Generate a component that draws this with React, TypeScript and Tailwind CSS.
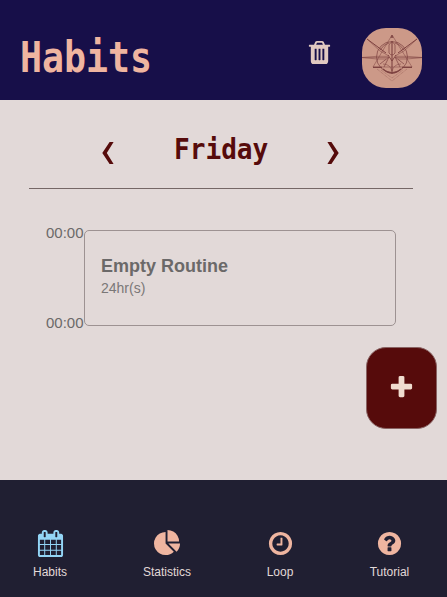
import React from "react";

const CIRCLE =
  "M1664 896q0 209-103 385.5t-279.5 279.5-385.5 103-385.5-103-279.5-279.5-103-385.5 103-385.5 279.5-279.5 385.5-103 385.5 103 279.5 279.5 103 385.5z";

const icons = {
  trash:
    "M704 1376v-704q0-14-9-23t-23-9h-64q-14 0-23 9t-9 23v704q0 14 9 23t23 9h64q14 0 23-9t9-23zm256 0v-704q0-14-9-23t-23-9h-64q-14 0-23 9t-9 23v704q0 14 9 23t23 9h64q14 0 23-9t9-23zm256 0v-704q0-14-9-23t-23-9h-64q-14 0-23 9t-9 23v704q0 14 9 23t23 9h64q14 0 23-9t9-23zm-544-992h448l-48-117q-7-9-17-11h-317q-10 2-17 11zm928 32v64q0 14-9 23t-23 9h-96v948q0 83-47 143.5t-113 60.5h-832q-66 0-113-58.5t-47-141.5v-952h-96q-14 0-23-9t-9-23v-64q0-14 9-23t23-9h309l70-167q15-37 54-63t79-26h320q40 0 79 26t54 63l70 167h309q14 0 23 9t9 23z",
  plus:
    "M1600 736v192q0 40-28 68t-68 28h-416v416q0 40-28 68t-68 28h-192q-40 0-68-28t-28-68v-416h-416q-40 0-68-28t-28-68v-192q0-40 28-68t68-28h416v-416q0-40 28-68t68-28h192q40 0 68 28t28 68v416h416q40 0 68 28t28 68z",
  calendar:
    "M192 1664h288v-288h-288v288zm352 0h320v-288h-320v288zm-352-352h288v-320h-288v320zm352 0h320v-320h-320v320zm-352-384h288v-288h-288v288zm736 736h320v-288h-320v288zm-384-736h320v-288h-320v288zm768 736h288v-288h-288v288zm-384-352h320v-320h-320v320zm-352-864v-288q0-13-9.5-22.5t-22.5-9.5h-64q-13 0-22.5 9.5t-9.5 22.5v288q0 13 9.5 22.5t22.5 9.5h64q13 0 22.5-9.5t9.5-22.5zm736 864h288v-320h-288v320zm-384-384h320v-288h-320v288zm384 0h288v-288h-288v288zm32-480v-288q0-13-9.5-22.5t-22.5-9.5h-64q-13 0-22.5 9.5t-9.5 22.5v288q0 13 9.5 22.5t22.5 9.5h64q13 0 22.5-9.5t9.5-22.5zm384-64v1280q0 52-38 90t-90 38h-1408q-52 0-90-38t-38-90v-1280q0-52 38-90t90-38h128v-96q0-66 47-113t113-47h64q66 0 113 47t47 113v96h384v-96q0-66 47-113t113-47h64q66 0 113 47t47 113v96h128q52 0 90 38t38 90z",
  pie:
    "M768 890l546 546q-106 108-247.5 168t-298.5 60q-209 0-385.5-103t-279.5-279.5-103-385.5 103-385.5 279.5-279.5 385.5-103v762zm187 6h773q0 157-60 298.5t-168 247.5zm709-128h-768v-768q209 0 385.5 103t279.5 279.5 103 385.5z",
  clock:
    "M1024 544v448q0 14-9 23t-23 9h-320q-14 0-23-9t-9-23v-64q0-14 9-23t23-9h224v-352q0-14 9-23t23-9h64q14 0 23 9t9 23zM1440 896q0-148-73-273t-198-198-273-73-273 73-198 198-73 273 73 273 198 198 273 73 273-73 198-198 73-273z" +
    CIRCLE,
  question:
    "M1024 1376v-192q0-14-9-23t-23-9h-192q-14 0-23 9t-9 23v192q0 14 9 23t23 9h192q14 0 23-9t9-23zm256-672q0-88-55.5-163t-138.5-116-170-41q-243 0-371 213-15 24 8 42l132 100q7 6 19 6 16 0 25-12 53-68 86-92 34-24 86-24 48 0 85.5 26t37.5 59q0 38-20 61t-68 45q-63 28-115.5 86.5t-52.5 125.5v36q0 14 9 23t23 9h192q14 0 23-9t9-23q0-19 21.5-49.5t54.5-49.5q32-18 49-28.5t46-35 44.5-48 28-60.5 12.5-81z" +
    CIRCLE,
};

function Icon({ name, className = "" }: { name: keyof typeof icons; className?: string }) {
  return (
    <svg viewBox="0 0 1792 1792" fill="currentColor" fillRule="evenodd" className={`size-[27px] shrink-0 overflow-visible ${className}`}>
      <path d={icons[name]} />
    </svg>
  );
}

function Chevron({ flip = false }: { flip?: boolean }) {
  return (
    <svg viewBox="0 0 12 22" fill="currentColor" className={`h-[22px] w-3 ${flip ? "-scale-x-100" : ""}`}>
      <path d="M7.6 0H11.6L4.8 11L11.6 22H7.6L.3 11Z" />
    </svg>
  );
}

function Emblem() {
  return (
    <svg viewBox="0 0 60 60" className="size-[60px]" fill="none" stroke="#7d4240" strokeWidth=".5">
      <circle cx="30" cy="29" r="15.5" strokeWidth=".7" />
      <path d="M30 7L50 39H11Z" strokeWidth=".5" />
      <path d="M28.8 9.5L30 7L31.2 9.5Z" fill="#7d4240" />
      <path d="M11 39.3H20M40 39.3H50" strokeWidth="1.3" />
      <path d="M5 11L24 25M55 11L36 25" strokeWidth="1" />
      <path d="M5 11L18 23L27 28M55 11L42 23L33 28" />
      <path d="M0 29.5L15 28.3H26M60 29.5L45 28.3H34M0 29.5L15 31H24M60 29.5L45 31H36" />
      <path d="M0 29.6H26M34 29.6H60" strokeWidth=".5" />
      <path d="M30 13V46" strokeWidth="1.1" />
      <path d="M27 17Q30 11 33 17V25Q30 29 27 25Z" strokeWidth=".7" />
      <path d="M26 27L30 33L34 27" strokeWidth=".9" />
      <path d="M18 22Q22 16 27 15M42 22Q38 16 33 15M18 36L27 29L22 39M42 36L33 29L38 39" strokeWidth=".7" />
      <path d="M21 36Q28 36 30 43Q32 36 39 36" />
      <path d="M21 41Q30 49 39 41" strokeWidth="1.3" />
      <path d="M15 41L30 53L45 41M19 42L30 50L41 42" strokeWidth=".6" strokeDasharray="1 .7" opacity=".65" />
    </svg>
  );
}

const tabs: { icon: keyof typeof icons; label: string; width: string; color: string }[] = [
  { icon: "calendar", label: "Habits", width: "w-[100px]", color: "text-[#93d5f6]" },
  { icon: "pie", label: "Statistics", width: "w-[134px]", color: "text-[#efb5a0]" },
  { icon: "clock", label: "Loop", width: "w-[92px]", color: "text-[#efb5a0]" },
  { icon: "question", label: "Tutorial", width: "w-[121px]", color: "text-[#efb5a0]" },
];

export default function App() {
  return (
    <div className="flex h-[597px] w-[447px] flex-col overflow-hidden bg-[#e2d9d8] font-['Liberation_Sans',Arial,sans-serif]">
      <header className="flex h-[100px] shrink-0 items-start bg-[#170f49] pl-5">
        <h1 className="mt-[34px] w-[286px] font-['DejaVu_Sans_Mono',monospace] text-[42px] leading-[48px] font-bold text-[#efb5a0]">
          <span className="inline-block origin-left scale-x-[.87]">Habits</span>
        </h1>
        <button className="mt-[39px] text-[#e1c9c1]">
          <Icon name="trash" />
        </button>
        <div className="mt-7 ml-[29px] overflow-hidden rounded-[24px] bg-[#cc9988]">
          <Emblem />
        </div>
      </header>

      <main className="flex h-[380px] shrink-0 flex-col">
        <div className="mr-[34px] ml-[29px] flex h-[89px] border-b border-[#756766] pl-[73px] text-[#560b0b]">
          <button className="mt-[42px] h-[22px]"><Chevron /></button>
          <h2 className="mt-[31px] ml-[60px] w-[153px] font-['DejaVu_Sans_Mono',monospace] text-[29px] leading-9 font-bold">
            <span className="inline-block origin-left scale-x-[.9]">Friday</span>
          </h2>
          <button className="mt-[42px] h-[22px]"><Chevron flip /></button>
        </div>

        <section className="mt-[41px] flex h-24 pl-[46px] text-[#6b6969]">
          <div className="flex w-[38px] flex-col justify-between text-[15px] leading-[17px]">
            <span className="-mt-1.5">00:00</span>
            <span className="-mb-[5px]">00:00</span>
          </div>
          <div className="w-[312px] rounded-[5px] border border-[#9d9292] pt-[25px] pl-4">
            <h3 className="text-lg leading-5 font-bold">Empty Routine</h3>
            <p className="mt-1 text-sm leading-4 text-[#7a7777]">24hr(s)</p>
          </div>
        </section>

        <button className="mt-[21px] mr-[10px] flex h-[82px] w-[71px] items-center justify-center self-end rounded-[20px] border border-[#896363] bg-[#560b0b] pb-[2px] text-[#f0ddd0]">
          <Icon name="plus" />
        </button>
      </main>

      <nav className="flex flex-1 items-start bg-[#201f32] pt-[50px]">
        {tabs.map((tab) => (
          <button key={tab.label} className={`flex shrink-0 flex-col items-center ${tab.width} ${tab.label === "Tutorial" ? "ml-[3px]" : ""}`}>
            <Icon name={tab.icon} className={tab.color} />
            <span className="mt-2 text-xs leading-[14px] text-[#e2d9d8]">{tab.label}</span>
          </button>
        ))}
      </nav>
    </div>
  );
}
